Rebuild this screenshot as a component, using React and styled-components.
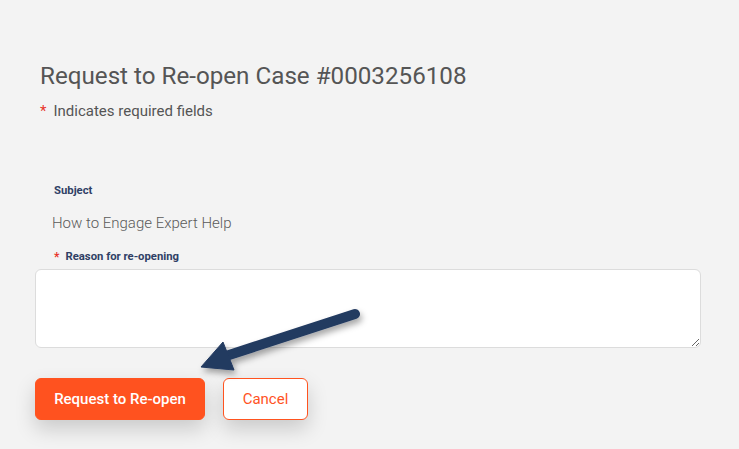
import React from "react";
import styled, { createGlobalStyle } from "styled-components";

const Global = createGlobalStyle`
  html, body { margin: 0; padding: 0; background: #f3f3f3; }
  body { font-family: Roboto, "Liberation Sans", sans-serif; }
`;

const Page = styled.div`
  position: relative;
  width: 739px;
  height: 449px;
  background: #f3f3f3;
  box-sizing: border-box;
  padding: 60px 38px 0 35px;
  overflow: hidden;
`;

const Header = styled.div`
  padding-left: 5px;
`;

const Title = styled.h1`
  margin: 0;
  font-weight: 400;
  font-size: 24.2px;
  line-height: 32px;
  color: #555555;
`;

const Req = styled.div`
  margin-top: 9px;
  font-size: 15px;
  line-height: 20px;
  color: #555555;
  display: flex;
  gap: 7px;
`;

const Star = styled.span`
  color: #e8332a;
  font-size: ${p => p.$small ? "12px" : "15px"};
`;

const Form = styled.div`
  margin-top: 63px;
  display: flex;
  flex-direction: column;
`;

const Label = styled.div`
  padding-left: 19px;
  font-size: 11.3px;
  font-weight: 700;
  color: #2f4065;
  line-height: 14px;
  display: flex;
  gap: 6px;
  align-items: center;
`;

const Value = styled.div`
  padding-left: 17px;
  margin-top: 15px;
  margin-bottom: 17px;
  font-size: 15px;
  font-weight: 300;
  color: #5a5a5a;
  line-height: 20px;
`;

const Area = styled.textarea`
  margin-top: 5px;
  width: 666px;
  height: 79px;
  box-sizing: border-box;
  border: 1px solid #dcdcdc;
  border-radius: 6px;
  background: #fff;
  resize: vertical;
  font-family: inherit;
  outline: none;
`;

const Actions = styled.div`
  margin-top: 30px;
  display: flex;
  gap: 18px;
`;

const Btn = styled.button`
  height: 42px;
  padding: 0;
  border-radius: 6px;
  font-family: Roboto, "Liberation Sans", sans-serif;
  font-size: 15px;
  font-weight: ${p => p.$primary ? 500 : 400};
  white-space: nowrap;
  border: 1px solid #ff531f;
  background: ${p => p.$primary ? "#ff521f" : "#ffffff"};
  color: ${p => p.$primary ? "#ffffff" : "#ff531f"};
  box-shadow: 0 9px 20px rgba(0, 0, 0, 0.17);
  cursor: pointer;
  width: ${p => p.$primary ? "170px" : "85px"};
`;

const ArrowLayer = styled.svg`
  position: absolute;
  left: 0;
  top: 0;
  pointer-events: none;
`;

export default function App() {
  return (
    <>
      <Global />
      <Page>
        <Header>
          <Title>Request to Re-open Case #0003256108</Title>
          <Req>
            <Star>*</Star>
            <span>Indicates required fields</span>
          </Req>
        </Header>
        <Form>
          <Label>Subject</Label>
          <Value>How to Engage Expert Help</Value>
          <Label>
            <Star $small>*</Star>
            <span>Reason for re-opening</span>
          </Label>
          <Area />
        </Form>
        <Actions>
          <Btn $primary>Request to Re-open</Btn>
          <Btn>Cancel</Btn>
        </Actions>
        <ArrowLayer width="739" height="449" viewBox="0 0 739 449">
          <defs>
            <filter id="sh" x="-20%" y="-20%" width="140%" height="160%">
              <feDropShadow dx="2" dy="4" stdDeviation="3" floodColor="#000" floodOpacity="0.35" />
            </filter>
          </defs>
          <g filter="url(#sh)" fill="#223a60" stroke="#223a60">
            <line x1="355" y1="314" x2="226" y2="356" strokeWidth="10" strokeLinecap="round" />
            <polygon points="201,367 223,342 234,370" strokeWidth="1" strokeLinejoin="round" />
          </g>
        </ArrowLayer>
      </Page>
    </>
  );
}
